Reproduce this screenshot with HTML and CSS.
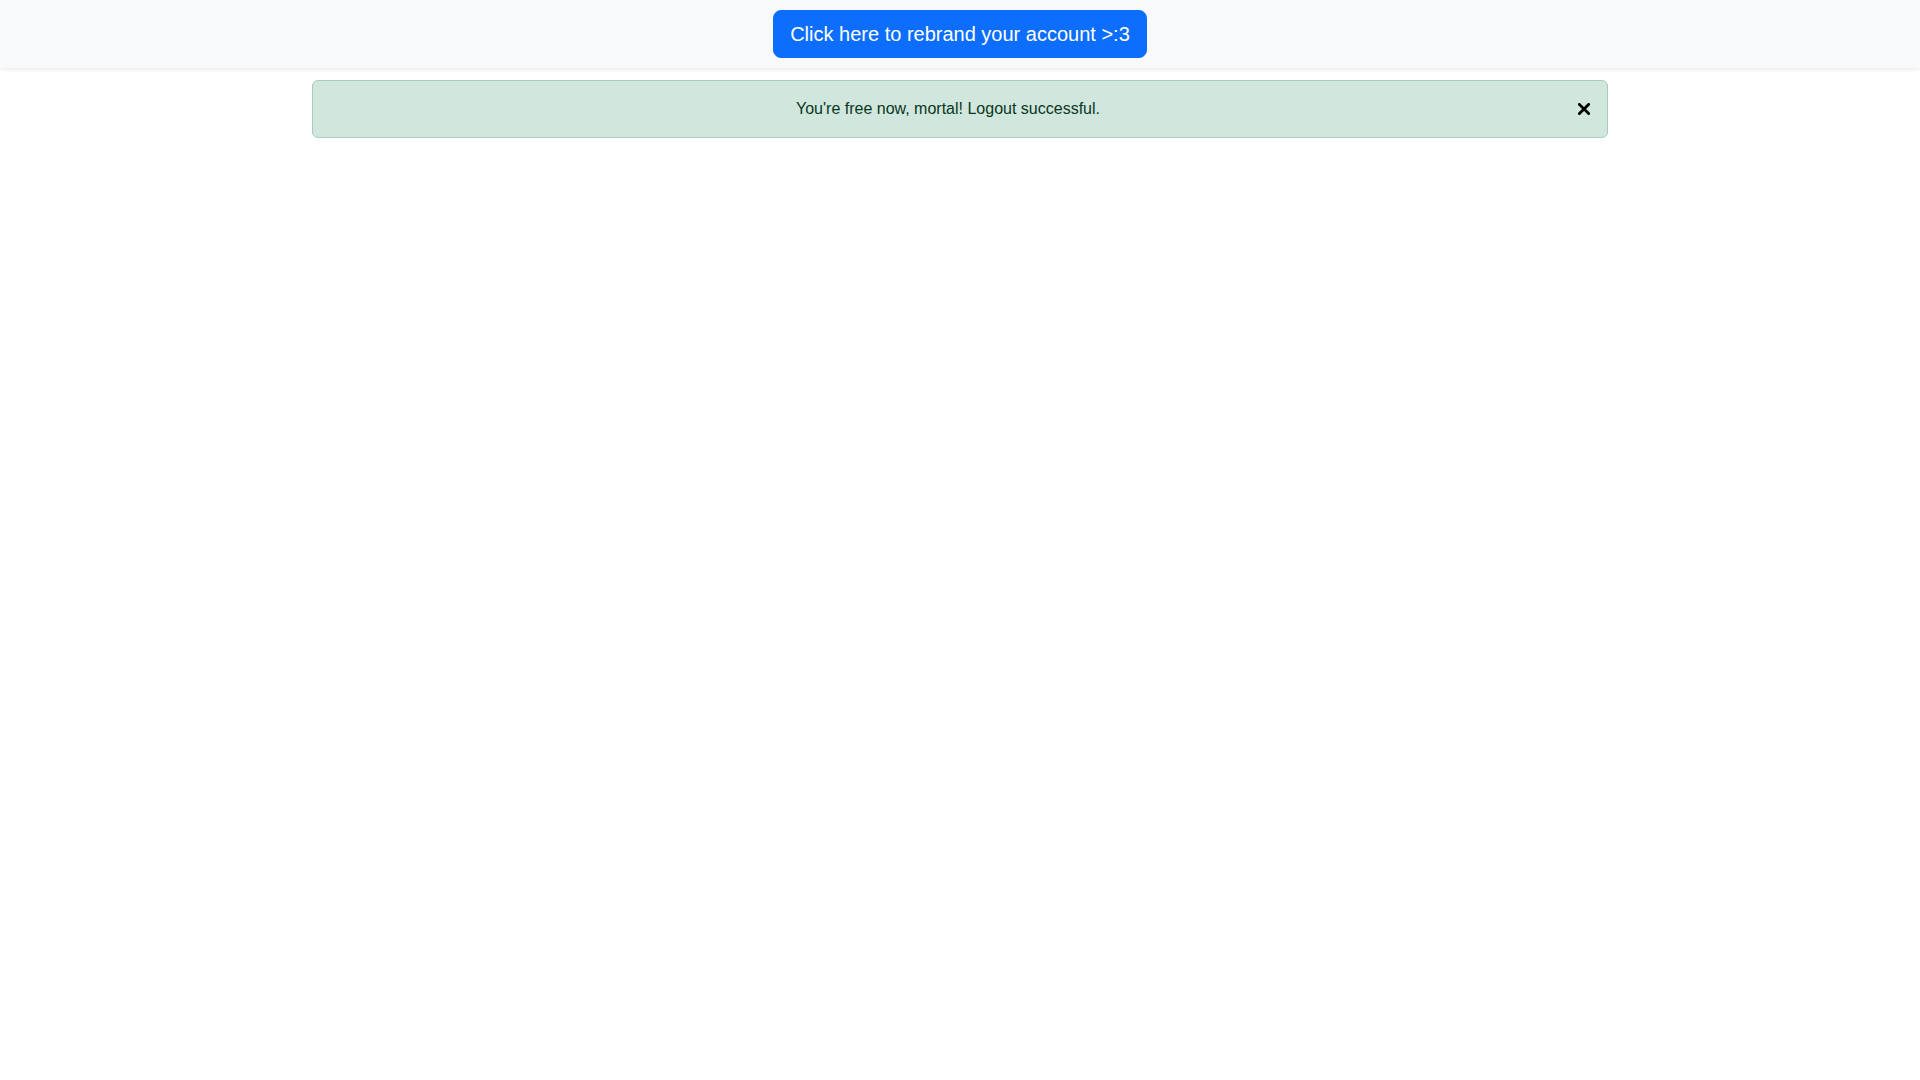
FILE: index.html
```html
<!DOCTYPE html>
<html lang="en">
<head>
<meta charset="utf-8">
<title>Logout</title>
<link rel="stylesheet" href="styles.css">
</head>
<body>
<nav class="navbar">
  <button class="btn-rebrand" type="button">Click here to rebrand your account &gt;:3</button>
</nav>
<main class="container">
  <div class="alert">
    <span class="alert-text">You're free now, mortal! Logout successful.</span>
    <button class="btn-close" type="button" aria-label="Close">
      <svg width="12" height="12" viewBox="0 0 12 12"><path d="M1.4 1.4L10.6 10.6M10.6 1.4L1.4 10.6" stroke="#000" stroke-width="2.8" stroke-linecap="square"/></svg>
    </button>
  </div>
</main>
</body>
</html>
```
FILE: styles.css
```css
html, body {
  margin: 0;
  padding: 0;
  background: #fff;
  font-family: "Liberation Sans", Arial, sans-serif;
  color: #212529;
}
.navbar {
  background: #f8f9fa;
  height: 68px;
  display: flex;
  align-items: center;
  justify-content: center;
  box-shadow: 0 2px 4px rgba(0, 0, 0, 0.075);
  position: relative;
  z-index: 1;
}
.btn-rebrand {
  font-family: "Liberation Sans", Arial, sans-serif;
  font-size: 20px;
  line-height: 30px;
  color: #fff;
  background: #0d6efd;
  border: 1px solid #0d6efd;
  border-radius: 8px;
  padding: 8px 16px;
  width: 374px;
  cursor: pointer;
}
.container {
  width: 1296px;
  margin: 12px auto 0;
}
.alert {
  position: relative;
  background: #d1e7dd;
  border: 1px solid #a3cfbb;
  border-radius: 6px;
  color: #0a3622;
  font-size: 16px;
  line-height: 24px;
  padding: 16px 40px 16px 16px;
  text-align: center;
}
.btn-close {
  position: absolute;
  top: 0;
  right: 0;
  width: 46px;
  height: 100%;
  padding: 0;
  border: 0;
  background: transparent;
  display: flex;
  align-items: center;
  justify-content: center;
  cursor: pointer;
}
.btn-close svg {
  display: block;
}
```
